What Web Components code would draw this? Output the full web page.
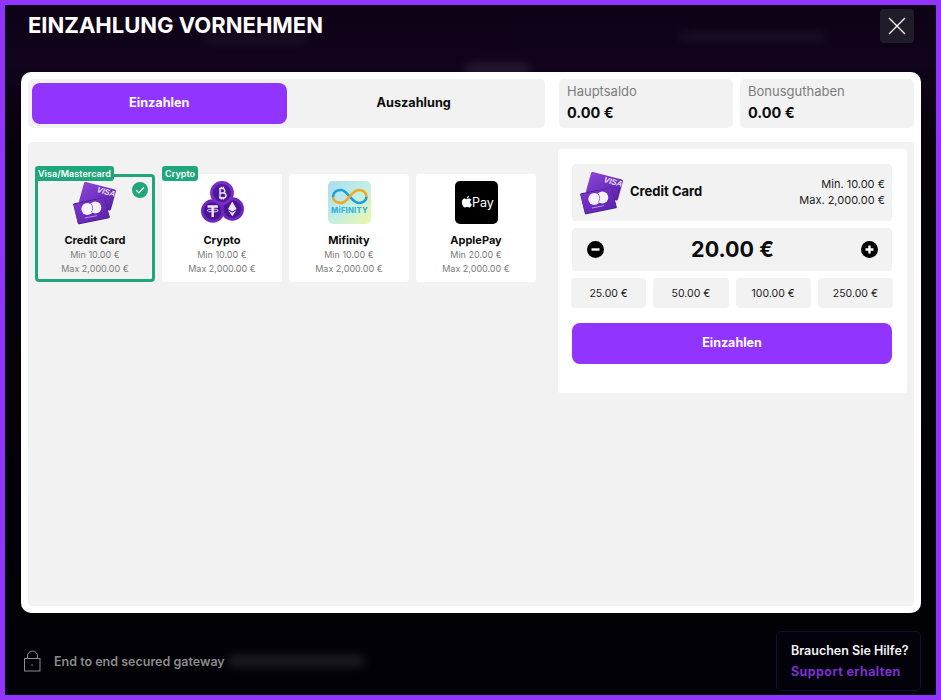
<!DOCTYPE html>
<html lang="de">
<head>
<meta charset="utf-8">
<title>Einzahlung vornehmen</title>
<style>
html,body{margin:0;padding:0;background:#9234ff}
body{font-family:"Inter","Noto Sans",sans-serif}
</style>
</head>
<body>
<deposit-app></deposit-app>
<script>
const PURPLE='#9234ff', GREEN='#1fa67c', GREY='#f2f2f2';
function def(name,css,html){
  customElements.define(name,class extends HTMLElement{
    constructor(){super();const s=this.attachShadow({mode:'open'});
      s.innerHTML='<style>'+css+'</style>'+html;}
  });
}
const cardSvg=`<svg width="44" height="44" viewBox="0 0 44 44" aria-hidden="true">
<defs><linearGradient id="g" x1="0" y1="0" x2="1" y2="1"><stop offset="0" stop-color="#8d45dc"/><stop offset="1" stop-color="#55209f"/></linearGradient>
<linearGradient id="g2" x1="0" y1="0" x2="1" y2="1"><stop offset="0" stop-color="#7d36d0"/><stop offset="1" stop-color="#5a22a8"/></linearGradient></defs>
<path d="M12.500 2.500L41.500 10 36.500 28 7.500 20.500z" fill="url(#g)" stroke="url(#g)" stroke-width="3" stroke-linejoin="round"/>
<text x="23.500" y="11" transform="rotate(15 23.500 11)" font-family="Liberation Sans" font-style="italic" font-weight="700" font-size="8" fill="#eee4ff">VISA</text>
<path d="M1.500 23.500L30.500 18 35.500 36 6 42z" fill="#3d1487" stroke="#3d1487" stroke-width="2.500" stroke-linejoin="round"/>
<path d="M1.800 24L30.500 18.200 35.200 35.500 6 41.500z" fill="url(#g2)" stroke="url(#g2)" stroke-width="2.200" stroke-linejoin="round"/>
<circle cx="14.300" cy="28" r="6" fill="#f6f1fd"/><circle cx="22.300" cy="26.500" r="6" fill="#f6f1fd"/>
<path d="M18.300 23c1.800 2.500 1.800 6 0 8.400" fill="none" stroke="#9a76d3" stroke-width="1"/>
<path d="M12 37l12-2.400" stroke="#b794e6" stroke-width="1"/>
</svg>`;

def('card-glyph',':host{display:block;line-height:0}',cardSvg);
def('crypto-glyph',':host{display:block;line-height:0}',`<svg width="43" height="43" viewBox="0 0 43 43" aria-hidden="true">
<circle cx="11.700" cy="30" r="11.700" fill="#6d27bd"/><circle cx="11.700" cy="30" r="8.800" fill="#4a1592"/>
<circle cx="31.300" cy="28" r="11.700" fill="#6d27bd"/><circle cx="31.300" cy="28" r="8.800" fill="#4a1592"/>
<circle cx="21" cy="12" r="11.900" fill="#7a2cc6"/><circle cx="21" cy="12" r="9" fill="#4e1898"/>
<path d="M19 7.200v9.600M18 7.500h4a2.300 2.300 0 0 1 0 4.500h-3h3.600a2.400 2.400 0 0 1 0 4.800h-4.600M20.400 5.800v1.600M22.400 5.800v1.600M20.400 16.800v1.600M22.400 16.800v1.600" fill="none" stroke="#f1e8ff" stroke-width="1.400"/>
<path d="M6.500 25.500h10.400M11.700 25.500v10.500" stroke="#f1e8ff" stroke-width="2.400" fill="none"/>
<ellipse cx="11.700" cy="29.500" rx="5.600" ry="1.400" fill="none" stroke="#f1e8ff" stroke-width=".9"/>
<path d="M31.300 20.500l-4.300 7.500 4.300 2.500 4.300-2.500zM27.200 29.300l4.100 6 4.100-6-4.100 2.400z" fill="#f1e8ff"/>
</svg>`);
def('mifinity-glyph',`:host{display:block;line-height:0}
text{font-family:"Inter",sans-serif}`,`<svg width="43" height="43" viewBox="0 0 43 43" aria-hidden="true">
<defs><linearGradient id="m" x1="0" y1="0" x2="1" y2="1"><stop offset="0" stop-color="#a9dcf3"/><stop offset=".5" stop-color="#c0efe4"/><stop offset="1" stop-color="#eef7a6"/></linearGradient></defs>
<rect width="43" height="43" rx="5" fill="url(#m)"/>
<path d="M5 16c0-4.500 3.500-7 8-7 7 0 10 13 18 13 4 0 7.500-2.500 7.500-6.500" fill="none" stroke="#1d9ed9" stroke-width="2.600"/>
<path d="M38.500 15.500c0-4-3.500-6.500-7.500-6.500-8 0-11 13-18 13-4.500 0-8-2.500-8-6" fill="none" stroke="#f2a826" stroke-width="2.600"/>
<text x="21.500" y="32" text-anchor="middle" font-size="7.600" font-weight="800" letter-spacing=".25" fill="#39b2e2">MiFINITY</text>
</svg>`);
def('apple-glyph',`:host{display:block;line-height:0}
text{font-family:"Inter",sans-serif}`,`<svg width="43" height="43" viewBox="0 0 43 43" aria-hidden="true">
<rect width="43" height="43" rx="5" fill="#000"/>
<path transform="translate(-4.500 -.5)" d="M13.600 18.100c1.100 0 1.800.6 2.500.6s1.500-.7 2.700-.6c1 .1 1.700.5 2.200 1.200-1.900 1.200-1.600 3.800.4 4.700-.5 1.400-1.500 3-2.600 3-.8 0-1.200-.5-2.200-.5s-1.500.5-2.200.5c-1.300 0-3-2.700-3-5.200 0-2.400 1.500-3.700 2.200-3.700zM16.200 17.800c0-1.200 1-2.300 2.200-2.400.1 1.300-1 2.500-2.200 2.400z" fill="#fff"/>
<text x="17" y="26" font-size="12.500" font-weight="400" fill="#fff">Pay</text>
</svg>`);

def('pay-card',`:host{display:block;position:relative;box-sizing:border-box;height:108px;background:#fff;border-radius:4px;text-align:center;font-family:"Inter","Noto Sans",sans-serif}
:host([selected]){background:${GREY};outline:3px solid ${GREEN};outline-offset:-3px}
.ico{display:flex;justify-content:center;padding-top:7px;height:44px}
.name{font-size:11px;font-weight:700;color:#0c0c0c;line-height:15px;margin-top:8px}
.lim{font-size:9px;color:#7c7c7c;line-height:14px}
.name+.lim{margin-top:0}
.badge{position:absolute;left:0;top:-8px;height:15px;padding:0 3px;background:${GREEN};border-radius:3px;color:#fff;font-size:9px;font-weight:600;line-height:15px;letter-spacing:.05px;display:none}
:host([badge]) .badge{display:block}
.check{position:absolute;right:7px;top:8px;display:none;line-height:0}
:host([selected]) .check{display:block}`,
`<span class="badge"><slot name="badge"></slot></span>
<span class="check"><svg width="16" height="16" viewBox="0 0 16 16"><circle cx="8" cy="8" r="8" fill="${GREEN}"/><path d="M4.200 8.300l2.600 2.600 5-5.400" fill="none" stroke="#fff" stroke-width="1.300"/></svg></span>
<div class="ico"><slot name="icon"></slot></div>
<div class="name"><slot name="name"></slot></div>
<div class="lim"><slot name="min"></slot></div>
<div class="lim"><slot name="max"></slot></div>`);

def('tab-switch',`:host{display:flex;box-sizing:border-box;width:517px;height:49px;padding:4px;background:${GREY};border-radius:5px;font-family:"Inter",sans-serif}
div{flex:1;display:flex;align-items:center;justify-content:center;font-size:12.700px;font-weight:700;color:#0c0c0c;border-radius:8px;padding-bottom:2px}
.on{background:${PURPLE};color:#fff}`,`<div class="on">Einzahlen</div><div>Auszahlung</div>`);

def('balance-box',`:host{display:block;box-sizing:border-box;width:174px;height:49px;padding:4px 8px;background:${GREY};border-radius:5px;font-family:"Inter",sans-serif}
.l{font-size:13px;color:#7d7d7d;line-height:17px}
.v{font-size:14.500px;font-weight:700;color:#0c0c0c;line-height:25px}`,
`<div class="l"><slot name="label"></slot></div><div class="v"><slot name="value"></slot></div>`);

def('quick-amount',`:host{display:flex;flex:1;height:30px;align-items:center;justify-content:center;background:${GREY};border-radius:4px;font-size:10.500px;color:#1a1a1a;font-family:"Inter",sans-serif}`,`<slot></slot>`);

def('deposit-panel',`:host{display:block;box-sizing:border-box;width:349px;height:244px;background:#fff;border-radius:3px;padding:15px 15px 0 14px;font-family:"Inter",sans-serif}
.head{display:flex;align-items:center;height:57px;background:${GREY};border-radius:4px;padding:0 7px 0 8px}
.head .n{font-size:13px;font-weight:700;color:#0c0c0c;margin:0 0 3px 6px;flex:1}
.head .r{font-size:11px;color:#222;text-align:right;line-height:16px;margin-bottom:1px}
.amt{display:flex;align-items:center;justify-content:space-between;height:43px;margin-top:7px;background:${GREY};border-radius:4px;padding:0 14px 0 15px;font-size:21.500px;font-weight:700;color:#0c0c0c}
.amt span{padding-bottom:2px}
.amt svg{display:block}
.q{display:flex;gap:7px;margin:7px -1px 0}
.go{display:flex;align-items:center;justify-content:center;height:41px;margin-top:15px;background:${PURPLE};border-radius:8px;color:#fff;font-size:12.500px;font-weight:700;padding-bottom:2px;box-sizing:border-box}`,
`<div class="head"><card-glyph></card-glyph><span class="n">Credit Card</span><span class="r">Min. 10.00 €<br>Max. 2,000.00 €</span></div>
<div class="amt"><svg width="17" height="17" viewBox="0 0 17 17"><circle cx="8.500" cy="8.500" r="8.500" fill="#000"/><path d="M4.500 8.500h8" stroke="#fff" stroke-width="2.400"/></svg><span>20.00 €</span><svg width="17" height="17" viewBox="0 0 17 17"><circle cx="8.500" cy="8.500" r="8.500" fill="#000"/><path d="M4.500 8.500h8M8.500 4.500v8" stroke="#fff" stroke-width="2.400"/></svg></div>
<div class="q"><quick-amount>25.00 €</quick-amount><quick-amount>50.00 €</quick-amount><quick-amount>100.00 €</quick-amount><quick-amount>250.00 €</quick-amount></div>
<div class="go">Einzahlen</div>`);

def('help-box',`:host{display:block;box-sizing:border-box;width:145px;height:60px;padding:8px 14px;border:1px solid #17102a;border-radius:5px;background:#03020a;font-family:"Inter",sans-serif;font-size:12.500px;font-weight:600;line-height:21px;white-space:nowrap}
.a{color:#f4f4f4}.b{color:#7a30d0;font-weight:700;letter-spacing:.4px}`,`<div class="a">Brauchen Sie Hilfe?</div><div class="b">Support erhalten</div>`);

def('deposit-app',`:host{display:block;box-sizing:border-box;width:941px;height:700px;padding:5px;background:${PURPLE};font-family:"Inter",sans-serif}
.dark{position:relative;height:690px;overflow:hidden;display:flex;flex-direction:column;background:linear-gradient(180deg,#0e0216 0,#10031b 60px,#070209 140px,#020106 612px,#020107 100%)}
.blur{position:absolute;background:#fff;filter:blur(5px);border-radius:6px}
header{position:relative;display:flex;justify-content:space-between;height:67px;padding:4px 22px 0 23px;box-sizing:border-box}
h1{margin:0;padding-top:4px;font-size:22px;font-weight:700;line-height:25px;color:#fff}
.x{width:34px;height:34px;border-radius:4px;background:#211c2a;display:flex;align-items:center;justify-content:center}
.panel{position:relative;box-sizing:border-box;margin:0 15px 0 16px;height:541px;background:#fff;border-radius:10px;padding:7px}
.top{display:flex;gap:7px}
.top tab-switch{margin-right:7px}
.main{display:flex;justify-content:space-between;height:464px;margin-top:14px;padding:7px;box-sizing:border-box;background:${GREY};border-radius:4px}
.cards{display:grid;grid-template-columns:repeat(4,120px);gap:7px;width:501px;height:108px;margin-top:25px}
.foot{position:relative;flex:1;display:flex;justify-content:space-between;padding:18px 15px 0 19px;box-sizing:border-box}
.sec{display:flex;align-items:center;height:24px;margin-top:18px;gap:13px;font-size:12.500px;font-weight:600;color:#8b8b8b}
.sec svg{display:block}`,
`<div class="dark">
<span class="blur" style="left:198px;top:29px;width:105px;height:9px;opacity:.05"></span>
<span class="blur" style="left:675px;top:27px;width:145px;height:9px;opacity:.05"></span>
<span class="blur" style="left:460px;top:58px;width:65px;height:12px;opacity:.09"></span>
<span class="blur" style="left:222px;top:650px;width:138px;height:12px;opacity:.1"></span>
<header><h1>EINZAHLUNG VORNEHMEN</h1><div class="x"><svg width="18" height="18" viewBox="0 0 18 18"><path d="M1 1l16 16M17 1L1 17" stroke="#fff" stroke-width="1.300" fill="none"/></svg></div></header>
<div class="panel">
<div class="top"><tab-switch></tab-switch>
<balance-box><span slot="label">Hauptsaldo</span><span slot="value">0.00 €</span></balance-box>
<balance-box><span slot="label">Bonusguthaben</span><span slot="value">0.00 €</span></balance-box></div>
<div class="main">
<div class="cards">
<pay-card selected badge><span slot="badge">Visa/Mastercard</span><card-glyph slot="icon"></card-glyph><span slot="name">Credit Card</span><span slot="min">Min 10.00 €</span><span slot="max">Max 2,000.00 €</span></pay-card>
<pay-card badge><span slot="badge">Crypto</span><crypto-glyph slot="icon"></crypto-glyph><span slot="name">Crypto</span><span slot="min">Min 10.00 €</span><span slot="max">Max 2,000.00 €</span></pay-card>
<pay-card><mifinity-glyph slot="icon"></mifinity-glyph><span slot="name">Mifinity</span><span slot="min">Min 10.00 €</span><span slot="max">Max 2,000.00 €</span></pay-card>
<pay-card><apple-glyph slot="icon"></apple-glyph><span slot="name">ApplePay</span><span slot="min">Min 20.00 €</span><span slot="max">Max 2,000.00 €</span></pay-card>
</div>
<deposit-panel></deposit-panel>
</div>
</div>
<div class="foot"><div class="sec"><svg width="17" height="22" viewBox="0 0 17 22"><path d="M3.500 9V6a5 5 0 0 1 10 0v3" fill="none" stroke="#8b8b8b" stroke-width="1"/><rect x=".5" y="8.500" width="15.500" height="12.500" fill="none" stroke="#8b8b8b"/><circle cx="8" cy="15" r=".8" fill="#8b8b8b"/></svg><span>End to end secured gateway</span></div><help-box></help-box></div>
</div>`);
</script>
</body>
</html>
